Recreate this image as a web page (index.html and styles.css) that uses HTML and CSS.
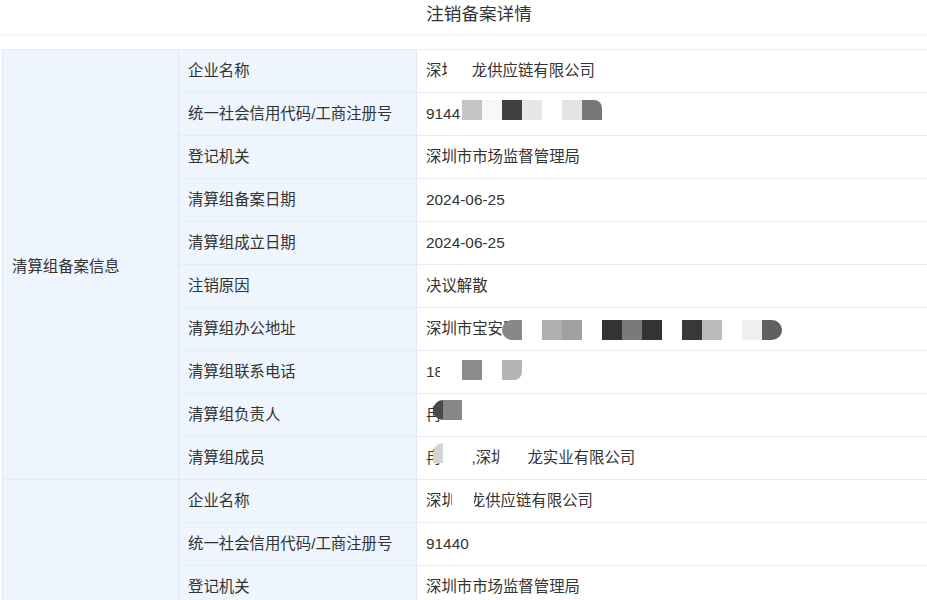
FILE: index.html
```html
<!DOCTYPE html>
<html lang="zh-CN">
<head>
<meta charset="utf-8">
<title>注销备案详情</title>
<link rel="stylesheet" href="styles.css">
</head>
<body>
<div class="page">
  <header class="title-bar"><h1 class="title">注销备案详情</h1></header>
  <div class="detail">
    <section class="group">
      <div class="group-name">清算组备案信息</div>
      <div class="rows">
        <div class="row"><div class="label">企业名称</div><div class="value">深圳<span class="gap g15"></span>龙供应链有限公司<span class="mask m1"><i class="c w25"></i></span></div></div>
        <div class="row"><div class="label">统一社会信用代码/工商注册号</div><div class="value">9144<span class="mask m2"><i class="c c-c4"></i><i class="c c-f8"></i><i class="c c-40"></i><i class="c c-e6"></i><i class="c"></i><i class="c c-e4"></i><i class="c c-77 r-tr"></i></span></div></div>
        <div class="row"><div class="label">登记机关</div><div class="value">深圳市市场监督管理局</div></div>
        <div class="row"><div class="label">清算组备案日期</div><div class="value">2024-06-25</div></div>
        <div class="row"><div class="label">清算组成立日期</div><div class="value">2024-06-25</div></div>
        <div class="row"><div class="label">注销原因</div><div class="value">决议解散</div></div>
        <div class="row"><div class="label">清算组办公地址</div><div class="value">深圳市宝安区<span class="mask m7"><i class="c c-88 r-l"></i><i class="c"></i><i class="c c-b0"></i><i class="c c-a0"></i><i class="c"></i><i class="c c-33"></i><i class="c c-7a"></i><i class="c c-33"></i><i class="c"></i><i class="c c-38"></i><i class="c c-bb"></i><i class="c"></i><i class="c c-ef"></i><i class="c c-60 r-r"></i></span></div></div>
        <div class="row"><div class="label">清算组联系电话</div><div class="value">18<span class="mask m8"><i class="c w22"></i><i class="c c-8c"></i><i class="c"></i><i class="c c-b5 r-br"></i></span></div></div>
        <div class="row"><div class="label">清算组负责人</div><div class="value">冉<span class="mask m9"><i class="c w10 c-4a r-l"></i><i class="c w19 c-87"></i></span></div></div>
        <div class="row"><div class="label">清算组成员</div><div class="value">冉<span class="gap g30"></span>,深圳<span class="gap g21"></span>龙实业有限公司<span class="mask m10a"><i class="c w10 c-d0 r-tl"></i><i class="c w29"></i></span><span class="mask m10b"><i class="c w27"></i></span></div></div>
      </div>
    </section>
    <section class="group">
      <div class="group-name">清算组备案信息</div>
      <div class="rows">
        <div class="row"><div class="label">企业名称</div><div class="value">深圳<span class="gap g13"></span>龙供应链有限公司<span class="mask m11"><i class="c w22"></i></span></div></div>
        <div class="row"><div class="label">统一社会信用代码/工商注册号</div><div class="value">91440</div></div>
        <div class="row"><div class="label">登记机关</div><div class="value">深圳市市场监督管理局</div></div>
        <div class="row"><div class="label">清算组备案日期</div><div class="value">2024-06-25</div></div>
        <div class="row"><div class="label">清算组成立日期</div><div class="value">2024-06-25</div></div>
        <div class="row"><div class="label">注销原因</div><div class="value">决议解散</div></div>
        <div class="row"><div class="label">清算组办公地址</div><div class="value">深圳市宝安区</div></div>
        <div class="row"><div class="label">清算组联系电话</div><div class="value">18</div></div>
        <div class="row"><div class="label">清算组负责人</div><div class="value">冉</div></div>
        <div class="row"><div class="label">清算组成员</div><div class="value">冉</div></div>
      </div>
    </section>
  </div>
</div>
</body>
</html>
```
FILE: styles.css
```css
html, body {
  margin: 0;
  padding: 0;
  overflow: hidden;
  background: #fff;
}
body {
  font-family: "Liberation Sans", "Noto Sans CJK SC", sans-serif;
  font-size: 15.4px;
  color: #333;
}
.page {
  width: 958px;
}
.title-bar {
  padding-bottom: 6px;
  border-bottom: 2px solid #f6f6f6;
  margin-bottom: 13px;
}
.title {
  margin: 0;
  font-size: 17.6px;
  font-weight: normal;
  line-height: 28px;
  text-align: center;
  color: #333;
}
.detail {
  margin-left: 2px;
  border-left: 1px solid #dde8f5;
  border-top: 1px solid #e3ecf7;
}
.group {
  display: grid;
  grid-template-columns: 176px 1fr;
  border-bottom: 1px solid #e3ecf7;
}
.group-name {
  box-sizing: border-box;
  background: #eef5fd;
  border-right: 1px solid #dfe9f5;
  display: flex;
  align-items: center;
  padding-left: 9px;
}
.row {
  display: grid;
  grid-template-columns: 238px 1fr;
  height: 43px;
  box-sizing: border-box;
  border-bottom: 1px solid #e3ecf7;
}
.row:last-child {
  border-bottom: 0;
  height: 42px;
}
.label {
  box-sizing: border-box;
  background: #eef5fd;
  border-right: 1px solid #dfe9f5;
  padding-left: 9px;
  line-height: 42px;
  white-space: nowrap;
}
.value {
  position: relative;
  padding-left: 9px;
  line-height: 42px;
  white-space: nowrap;
}
.gap { display: inline-block; height: 1px; }
.g13 { width: 13px; }
.g15 { width: 15px; }
.g21 { width: 21px; }
.g30 { width: 30px; }

/* redaction mosaics laid over the text */
.mask {
  position: absolute;
  display: flex;
  height: 20px;
}
.m1 { left: 30px; top: 11px; }
.m2 { left: 45px; top: 7px; }
.m7 { left: 85px; top: 12px; }
.m8 { left: 23px; top: 9px; }
.m9 { left: 16px; top: 6px; }
.m10a { left: 16px; top: 6px; }
.m10b { left: 83px; top: 11px; }
.m11 { left: 35px; top: 11px; }

.c { display: block; width: 20px; height: 20px; background: #fff; }
.w10 { width: 10px; }
.w19 { width: 19px; }
.w22 { width: 22px; }
.w25 { width: 25px; }
.w27 { width: 27px; }
.w29 { width: 29px; }
.c-c4 { background: #c4c4c4; }
.c-f8 { background: #f8f8f8; }
.c-40 { background: #404040; }
.c-e6 { background: #e6e6e6; }
.c-e4 { background: #e4e4e4; }
.c-77 { background: #777; }
.c-88 { background: #888; }
.c-b0 { background: #b0b0b0; }
.c-a0 { background: #a0a0a0; }
.c-33 { background: #333; }
.c-7a { background: #7a7a7a; }
.c-38 { background: #383838; }
.c-bb { background: #bbb; }
.c-ef { background: #efefef; }
.c-60 { background: #606060; }
.c-8c { background: #8c8c8c; }
.c-b5 { background: #b5b5b5; }
.c-4a { background: #4a4a4a; }
.c-87 { background: #878787; }
.c-d0 { background: #d4d4d4; }
.r-tr { border-top-right-radius: 8px; }
.r-br { border-bottom-right-radius: 8px; }
.r-tl { border-top-left-radius: 10px; }
.r-l { border-radius: 10px 0 0 10px; }
.r-r { border-radius: 0 10px 10px 0; }
```
